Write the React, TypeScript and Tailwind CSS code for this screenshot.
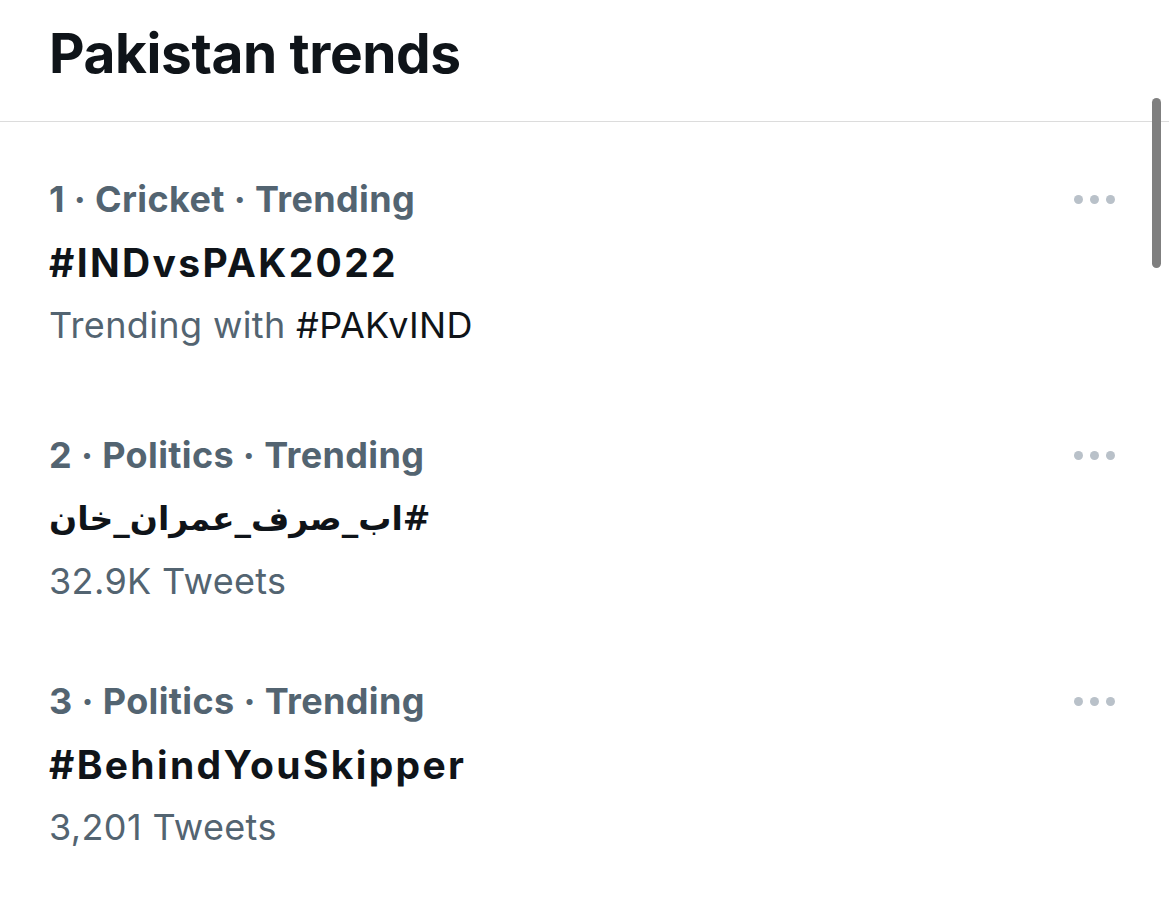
import React from "react"

const trends = [
  { rank: 1, cat: "Cricket", title: "#INDvsPAK2022", sub: "with", rtl: false, gap: "mt-0" },
  { rank: 2, cat: "Politics", title: "#اب_صرف_عمران_خان", sub: "32.9K Tweets", rtl: true, gap: "mt-[67px]" },
  { rank: 3, cat: "Politics", title: "#BehindYouSkipper", sub: "3,201 Tweets", rtl: false, gap: "mt-[57px]" },
]

function Dots() {
  return (
    <div className="flex h-[63px] items-center gap-[7px]">
      <span className="h-[9px] w-[9px] rounded-full bg-[#b9c1c9]" />
      <span className="h-[9px] w-[9px] rounded-full bg-[#b9c1c9]" />
      <span className="h-[9px] w-[9px] rounded-full bg-[#b9c1c9]" />
    </div>
  )
}

export default function App() {
  return (
    <div className="relative h-[914px] w-[1169px] overflow-hidden bg-white font-['Inter',sans-serif]">
      {/* header */}
      <div className="h-[121px] pl-[49px] pt-[26px]">
        <h1 className="text-[55px] font-bold leading-[55px] tracking-[-0.4px] text-[#0f1419]">Pakistan trends</h1>
      </div>
      <div className="h-[1px] w-full bg-[#dcdcdc]" />

      {/* trend list */}
      <div className="flex flex-col pt-[46px] pr-[54px] pl-[49px]">
        {trends.map((t) => (
          <div key={t.rank} className={`flex justify-between ${t.gap}`}>
            <div className="flex flex-col">
              <div className="text-[36px] font-bold leading-[63px] tracking-[0.01em] text-[#536471]">
                {t.rank} · {t.cat} · Trending
              </div>
              {t.rtl ? (
                <div className="flex h-[63px] items-center">
                  <span
                    dir="rtl"
                    className="font-['DejaVu_Sans',sans-serif] text-[33px] font-bold leading-[63px] text-[#0f1419]"
                  >
                    {t.title}
                  </span>
                </div>
              ) : (
                <div className="text-[39px] font-bold leading-[63px] tracking-[0.06em] text-[#0f1419]">{t.title}</div>
              )}
              {t.sub === "with" ? (
                <div className="text-[36px] leading-[63px] tracking-[0.01em] text-[#536471]">
                  Trending with <span className="text-[#0f1419]">#PAKvIND</span>
                </div>
              ) : (
                <div className="text-[36px] leading-[63px] tracking-[0.01em] text-[#536471]">{t.sub}</div>
              )}
            </div>
            <Dots />
          </div>
        ))}
      </div>

      {/* overlay scrollbar */}
      <div className="absolute top-[98px] left-[1152px] h-[170px] w-[9px] rounded-full bg-[#7f7f7f]" />
    </div>
  )
}
